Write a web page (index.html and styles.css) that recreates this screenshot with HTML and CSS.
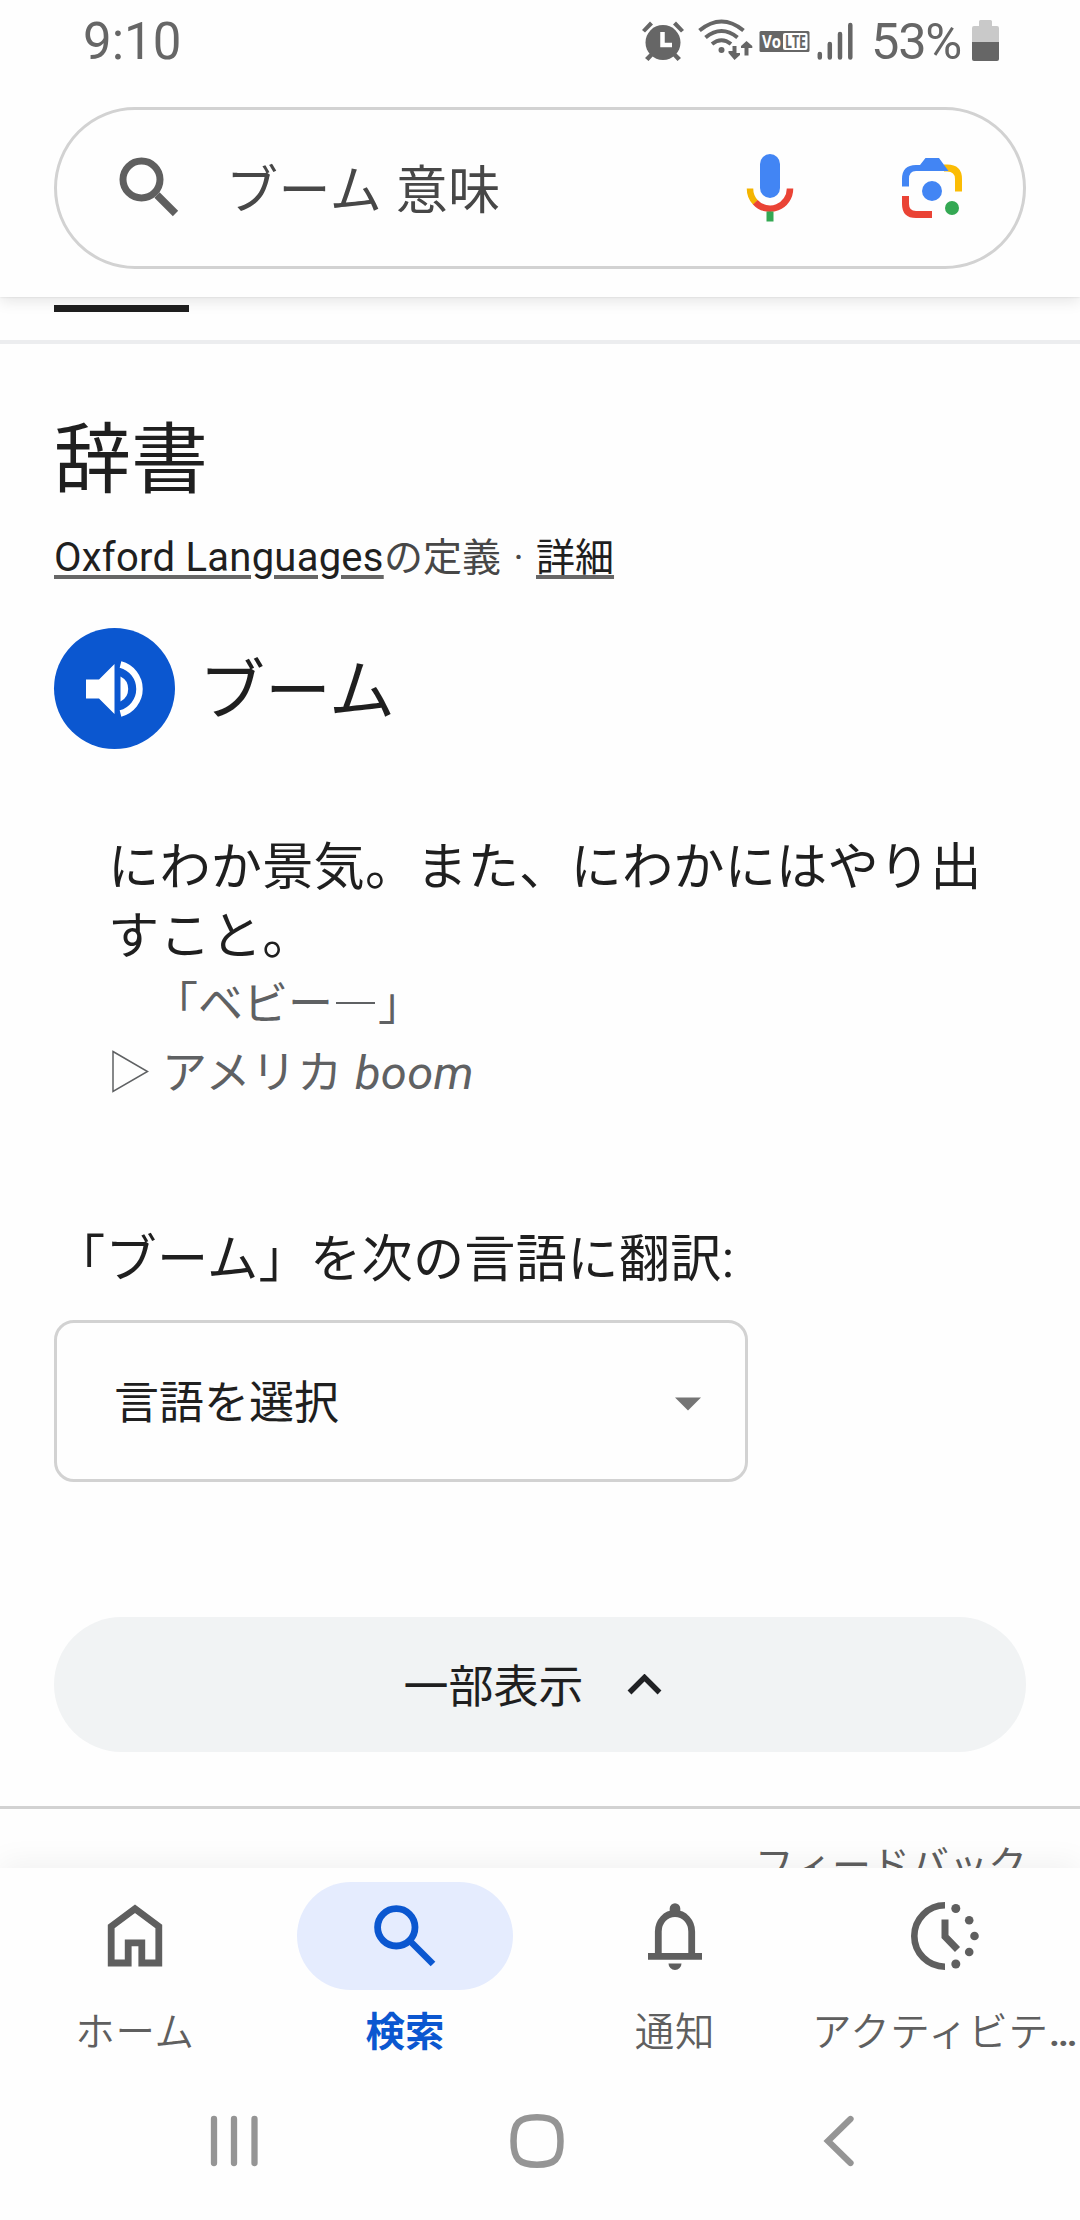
FILE: index.html
```html
<!DOCTYPE html>
<html lang="ja">
<head>
<meta charset="utf-8">
<title>ブーム 意味</title>
<link rel="stylesheet" href="styles.css">
</head>
<body>
<div class="screen">
  <header class="top">
    <div class="status">
      <span class="clock">9:10</span>
      <svg class="status-icons" width="254" height="50" viewBox="0 0 254 50">
        <g fill="#666">
          <circle cx="22" cy="25.500" r="17.500"/>
          <path d="M1 13 9 4.500 12 7.500 4 15.500ZM43 13 35 4.500 32 7.500 40 15.500ZM10 35 4 41 7.500 44 13 38ZM34 35 40 41 36.500 44 31 38Z"/>
          <circle cx="80.500" cy="33" r="3"/>
          <path d="M91.500 29h4v7h3.500v2L93.500 43 87.500 36v-2h4ZM103.500 38.500h4V31h3.800v-2L105.500 24 100 29v2h3.500Z"/>
          <rect x="118.500" y="14" width="50" height="21" rx="1.500"/>
        </g>
        <path d="M21.500 15v13H31" fill="none" stroke="#fff" stroke-width="4.500"/>
        <path d="M58.500 13.500Q80.500-4.500 102.500 13.500M64.500 20.500Q80.500 7.500 96.500 20.500M71 27Q80.500 19.500 90 27" fill="none" stroke="#666" stroke-width="4"/>
        <rect x="142" y="16" width="24.500" height="17" rx="2" fill="#fff"/>
        <text class="volte" x="121" y="30.500" textLength="19" lengthAdjust="spacingAndGlyphs" fill="#fff">Vo</text>
        <text class="volte" x="144" y="30.500" textLength="21" lengthAdjust="spacingAndGlyphs" fill="#666">LTE</text>
        <path d="M178.800 37v3.500M188.800 27v13.500M199 17v23.500M209.300 8v32.500" stroke="#666" stroke-width="4.500" stroke-linecap="round"/>
      </svg>
      <span class="percent">53%</span>
      <svg class="battery" width="27" height="41" viewBox="0 0 27 41">
        <path d="M7 6V1.500Q7 0 8.500 0h10Q20 0 20 1.500V6h5q2 0 2 2v14H0V8q0-2 2-2Z" fill="#c9c9c9"/>
        <path d="M0 22h27v17q0 2-2 2H2q-2 0-2-2Z" fill="#666"/>
      </svg>
    </div>
    <div class="search">
      <svg class="search-glass" width="60" height="60" viewBox="0 0 60 60" fill="none" stroke="#5f5f5f">
        <circle cx="22.500" cy="22.500" r="18.500" stroke-width="7"/>
        <path d="M38 38 56.500 56.500" stroke-width="7.500"/>
      </svg>
      <span class="query">ブーム 意味</span>
      <svg class="mic" width="48" height="68" viewBox="0 0 48 68">
        <rect x="14" y="0" width="20" height="44" rx="10" fill="#4285f4"/>
        <path d="M4 34.500A20 20 0 0 0 9.500 48.500" fill="none" stroke="#f4b400" stroke-width="6.500"/>
        <path d="M9.300 48.200A20 20 0 0 0 44 34.500" fill="none" stroke="#ea4335" stroke-width="6.500"/>
        <path d="M20.500 57.500h7V67.500h-7Z" fill="#34a853"/>
      </svg>
      <svg class="lens" width="61" height="61" viewBox="0 0 61 61">
        <path d="M56.500 33.500V21Q56.500 10 45 10H42" fill="none" stroke="#fbbc04" stroke-width="7"/>
        <path d="M0 28.500V21Q0 7 14 7h4L23.500 0H37l9.500 13H14q-7 0-7 8v7.500Z" fill="#4285f4"/>
        <path d="M3.500 38v8q0 10.500 10.500 10.500H30" fill="none" stroke="#ea4335" stroke-width="7"/>
        <circle cx="30" cy="33" r="10" fill="#4285f4"/>
        <circle cx="50" cy="50" r="7" fill="#34a853"/>
      </svg>
    </div>
  </header>

  <main class="content">
    <div class="tabs"><div class="tab-active"></div></div>
    <h1 class="title">辞書</h1>
    <p class="source"><a class="publisher">Oxford Languages</a>の定義<span class="dot">·</span><a>詳細</a></p>
    <div class="word">
      <span class="speak">
        <svg width="57" height="56" viewBox="0 0 57 56" fill="#fff">
          <path d="M0 18.500h13L28.500 3v50L13 37.500H0Z"/>
          <path d="M34.500 15.500a14 14 0 0 1 0 25Z"/>
          <path d="M34.500 3.500a25.300 25.300 0 0 1 0 49" fill="none" stroke="#fff" stroke-width="6.500"/>
        </svg>
      </span>
      <span class="headword">ブーム</span>
    </div>
    <div class="definition">
      <p class="meaning">にわか景気。また、にわかにはやり出すこと。</p>
      <p class="example">「ベビー<span class="dash"></span>」</p>
      <p class="origin"><svg width="37" height="43" viewBox="0 0 37 43"><path d="M1 1.500 35.500 21.500 1 41.500Z" fill="none" stroke="#5f6163" stroke-width="1.500"/></svg><span>アメリカ <i>boom</i></span></p>
    </div>
    <p class="translate">「ブーム」を次の言語に翻訳:</p>
    <div class="select">
      <span>言語を選択</span>
      <svg width="28" height="16" viewBox="0 0 28 16"><path d="M1 1.500H27L14 14.500Z" fill="#757575"/></svg>
    </div>
    <div class="less">
      <span>一部表示</span>
      <svg width="35" height="21" viewBox="0 0 35 21"><path d="M2.500 18.500 17.500 3.500 32.500 18.500" fill="none" stroke="#202124" stroke-width="5.500"/></svg>
    </div>
    <div class="rule"></div>
    <p class="feedback">フィードバック</p>
  </main>

  <footer class="bottom">
    <nav class="nav">
      <div class="item">
        <span class="pill"><svg width="68" height="68" viewBox="0 0 68 68"><path d="M10.200 24.500 34 6.700 57.800 24.500V61H40.800V40.800H27.200V61H10.200Z" fill="none" stroke="#5f5f5f" stroke-width="6.800"/></svg></span>
        <span class="label">ホーム</span>
      </div>
      <div class="item active">
        <span class="pill"><svg width="68" height="68" viewBox="0 0 68 68" fill="none" stroke="#0b57d0"><circle cx="25.300" cy="25.300" r="18.700" stroke-width="6.800"/><path d="M38.500 38.500 62 62" stroke-width="6.500"/></svg></span>
        <span class="label">検索</span>
      </div>
      <div class="item">
        <span class="pill"><svg width="68" height="68" viewBox="0 0 68 68"><path d="M17.300 51V29.500a16.700 18 0 0 1 33.400 0V51M7 54.300H61" fill="none" stroke="#5f5f5f" stroke-width="6.800"/><path d="M28.700 11V6.500a5.300 5.300 0 0 1 10.600 0V11ZM27.500 61.500h13a6.500 6.500 0 0 1-13 0Z" fill="#5f5f5f"/></svg></span>
        <span class="label">通知</span>
      </div>
      <div class="item">
        <span class="pill"><svg width="68" height="68" viewBox="0 0 68 68"><path d="M34 3.300a30.700 30.700 0 0 0 0 61.400" fill="none" stroke="#5f5f5f" stroke-width="6.600"/><path d="M34 17.500V34.500L46.500 47.500" fill="none" stroke="#5f5f5f" stroke-width="7"/><g fill="#5f5f5f"><circle cx="44.800" cy="6.500" r="4.500"/><circle cx="58.200" cy="18.200" r="4.300"/><circle cx="63.500" cy="34" r="4.300"/><circle cx="58.200" cy="50" r="4.300"/><circle cx="44.800" cy="62" r="4.500"/></g></svg></span>
        <span class="label">アクティビテ<b>…</b></span>
      </div>
    </nav>
    <div class="system">
      <svg width="50" height="56" viewBox="0 0 50 56"><path d="M5 6V50M25 6V50M45.500 6V50" stroke="#959595" stroke-width="6.300" stroke-linecap="round"/></svg>
      <svg class="home-key" width="56" height="56" viewBox="0 0 56 56"><path d="M28 4.300C46 4.300 51.500 10 51.500 28S46 51.700 28 51.700 4.500 46 4.500 28 10 4.300 28 4.300Z" fill="none" stroke="#959595" stroke-width="6.500"/></svg>
      <svg width="32" height="56" viewBox="0 0 32 56"><path d="M27.500 6 5 28 27.500 50" fill="none" stroke="#959595" stroke-width="6.300" stroke-linecap="round"/></svg>
    </div>
  </footer>
</div>
</body>
</html>
```
FILE: styles.css
```css
* {
  box-sizing: border-box;
}

body,
h1,
p {
  margin: 0;
}

body {
  background: #fefefe;
  color: #1f1f1f;
  font-family: Roboto, "Noto Sans CJK JP", sans-serif;
  font-weight: 400;
}

svg {
  display: block;
  flex: none;
}

.screen {
  display: flex;
  flex-direction: column;
  width: 1080px;
  height: 2220px;
  overflow: hidden;
  background: #fefefe;
}

/* header */
.top {
  position: relative;
  z-index: 1;
  flex: none;
  height: 297px;
  padding: 0 54px;
  background: #fefefe;
  box-shadow: 0 0 2px rgba(0, 0, 0, 0.12), 0 4px 14px rgba(0, 0, 0, 0.1);
}

.status {
  display: flex;
  align-items: center;
  height: 84px;
  padding: 0 27px 0 29px;
  color: #666;
  line-height: 86px;
}

.clock {
  flex: 1;
  font-size: 51px;
}

.status-icons {
  margin-top: -1px;
}

.volte {
  font: 700 17px "Open Sans", sans-serif;
}

.percent {
  width: 95px;
  margin-left: -24px;
  font-size: 50.5px;
  letter-spacing: -1.2px;
  white-space: nowrap;
}

.battery {
  margin: -4px 0 0 6px;
}

.search {
  display: flex;
  align-items: center;
  height: 162px;
  margin-top: 23px;
  padding: 0 60px 0 62px;
  border: 3px solid #d2d2d2;
  border-radius: 81px;
}

.search-glass {
  margin-top: -2px;
}

.query {
  flex: 1;
  margin-left: 47px;
  padding-top: 8px;
  color: #474747;
  font-size: 52px;
  letter-spacing: 0.6px;
  line-height: 70px;
}

.mic {
  margin-right: 108px;
}

/* result */
.content {
  flex: none;
  height: 1571px;
  padding: 0 54px;
  overflow: hidden;
}

.tabs {
  height: 47px;
  margin: 0 -54px;
  padding: 8px 54px 0;
  border-bottom: 4px solid #ecedef;
}

.tab-active {
  width: 135px;
  height: 7px;
  background: #1f1f1f;
}

.title {
  margin-top: 72px;
  font-size: 77px;
  font-weight: 400;
  line-height: 90px;
}

.source {
  margin-top: 27px;
  color: #474747;
  font-size: 39px;
  line-height: 50px;
  white-space: nowrap;
}

.source a {
  color: #1f1f1f;
  text-decoration: underline #666 4px;
  text-underline-offset: 4px;
}

.source .publisher {
  display: inline-block;
  width: 330px;
  font-size: 40px;
  letter-spacing: 0.25px;
}

.dot {
  display: inline-block;
  width: 35px;
  text-align: center;
}

.word {
  display: flex;
  align-items: center;
  gap: 24px;
  margin-top: 45px;
}

.speak {
  display: flex;
  align-items: center;
  justify-content: center;
  width: 121px;
  height: 121px;
  border-radius: 50%;
  background: #0b57d0;
}

.headword {
  padding-top: 6px;
  font-size: 66px;
  line-height: 115px;
}

.definition {
  margin-top: 84px;
  padding: 0 36px 0 54px;
}

.meaning {
  font-size: 51.2px;
  letter-spacing: 0.2px;
  line-height: 69px;
}

.example,
.origin {
  color: #5f6163;
  font-size: 45px;
  line-height: 68px;
}

.example {
  padding-left: 45px;
}

.dash {
  display: inline-block;
  width: 39px;
  height: 2px;
  margin: 0 3px;
  background: #5f6163;
  vertical-align: 16px;
}

.origin {
  display: flex;
  align-items: center;
  gap: 13px;
  height: 68px;
  padding-left: 4px;
  letter-spacing: 0.8px;
}

.origin svg {
  margin-top: -3px;
}

.origin i {
  font-size: 47px;
  letter-spacing: 0.3px;
}

.translate {
  margin-top: 123px;
  font-size: 51.2px;
  letter-spacing: 0.3px;
  line-height: 60px;
}

.select {
  display: flex;
  align-items: center;
  justify-content: space-between;
  width: 694px;
  height: 162px;
  margin-top: 30px;
  padding: 0 43px 0 57px;
  border: 3px solid #d2d2d2;
  border-radius: 20px;
  font-size: 45px;
}

.select span {
  padding-bottom: 3px;
}

.select svg {
  margin-top: 6px;
}

.less {
  display: flex;
  align-items: center;
  justify-content: center;
  gap: 43px;
  height: 135px;
  margin-top: 135px;
  padding-right: 15px;
  border-radius: 68px;
  background: #f1f3f4;
  font-size: 45px;
}

.less span {
  padding-bottom: 2px;
}

.rule {
  height: 3px;
  margin: 54px -54px 0;
  background: #d2d2d2;
}

.feedback {
  margin: 32px -1px 0 0;
  color: #5f5f5f;
  font-size: 39px;
  line-height: 50px;
  text-align: right;
}

/* bottom bars */
.bottom {
  position: relative;
  z-index: 1;
  flex: none;
  height: 352px;
  background: #fefefe;
  box-shadow: 0 -4px 30px rgba(0, 0, 0, 0.06);
}

.nav {
  display: grid;
  grid-template-columns: repeat(4, 270px);
  height: 219px;
  padding-top: 14px;
}

.item {
  display: flex;
  flex-direction: column;
  align-items: center;
  gap: 17px;
  color: #5f5f5f;
}

.pill {
  display: flex;
  align-items: center;
  justify-content: center;
  width: 216px;
  height: 108px;
  border-radius: 54px;
}

.label {
  padding-top: 1px;
  font-size: 39.5px;
  font-weight: 350;
  letter-spacing: 0.7px;
  line-height: 50px;
  white-space: nowrap;
}

.label b {
  font-weight: 600;
}

.active .pill {
  background: #e5ecfe;
}

.active .label {
  color: #0b57d0;
  font-weight: 700;
  letter-spacing: 0;
}

.system {
  display: flex;
  align-items: center;
  justify-content: space-between;
  height: 108px;
  padding: 0 225px 0 209px;
}

.home-key {
  margin: 0 4px 0 -4px;
}
```
